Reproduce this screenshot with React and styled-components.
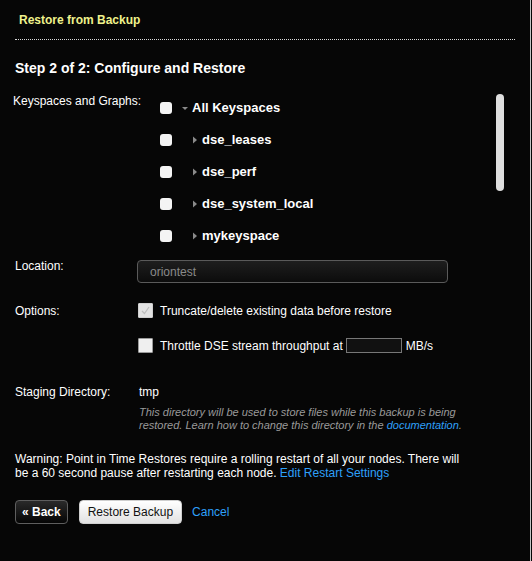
import React from 'react';
import styled, { createGlobalStyle } from 'styled-components';

const keyspaces = ['dse_leases', 'dse_perf', 'dse_system_local', 'mykeyspace'];

const Arrow = ({ open }) =>
  open ? (
    <svg width="8" height="8" viewBox="0 0 8 8">
      <path d="M1 3 L7 3 L4 6 Z" fill="#8a8a8a" />
    </svg>
  ) : (
    <svg width="8" height="8" viewBox="0 0 8 8">
      <path d="M2 0.5 L6 4 L2 7.5 Z" fill="#8a8a8a" />
    </svg>
  );

const App = () => {
  return (
    <>
      <GlobalStyle />
      <Panel>
        <Header>
          <Title>Restore from Backup</Title>
        </Header>
        <Body>
          <StepTitle>Step 2 of 2: Configure and Restore</StepTitle>

          <FieldRow $top={15}>
            <Label $offset={2} $shift={-2}>Keyspaces and Graphs:</Label>
            <TreeArea>
              <TreeList>
                <TreeRow>
                  <TreeCheck />
                  <ArrowBox>
                    <Arrow open />
                  </ArrowBox>
                  <TreeText>All Keyspaces</TreeText>
                </TreeRow>
                {keyspaces.map((name) => (
                  <TreeRow key={name} $child>
                    <TreeCheck />
                    <ArrowBox $child>
                      <Arrow />
                    </ArrowBox>
                    <TreeText>{name}</TreeText>
                  </TreeRow>
                ))}
              </TreeList>
              <ScrollThumb />
            </TreeArea>
          </FieldRow>

          <FieldRow $top={7}>
            <Label>Location:</Label>
            <TextInput placeholder="oriontest" readOnly />
          </FieldRow>

          <FieldRow $top={20}>
            <Label $offset={1}>Options:</Label>
            <Options>
              <OptionLine>
                <CheckBox $disabled>
                  <svg width="11" height="11" viewBox="0 0 11 11">
                    <path
                      d="M2 6 L4.5 8.5 L9 2"
                      fill="none"
                      stroke="#bdbdbd"
                      strokeWidth="1.2"
                    />
                  </svg>
                </CheckBox>
                <OptionText>Truncate/delete existing data before restore</OptionText>
              </OptionLine>
              <OptionLine>
                <CheckBox />
                <OptionText>Throttle DSE stream throughput at</OptionText>
                <SmallInput readOnly />
                <OptionText>MB/s</OptionText>
              </OptionLine>
            </Options>
          </FieldRow>

          <FieldRow $top={32}>
            <Label>Staging Directory:</Label>
            <div>
              <Value>tmp</Value>
              <Help>
                This directory will be used to store files while this backup is being
                <br />
                restored. Learn how to change this directory in the{' '}
                <Link href="#">documentation</Link>.
              </Help>
            </div>
          </FieldRow>

          <Warning>
            Warning: Point in Time Restores require a rolling restart of all your nodes. There will
            <br />
            be a 60 second pause after restarting each node. <Link href="#">Edit Restart Settings</Link>
          </Warning>

          <ButtonBar>
            <Button $dark>« Back</Button>
            <Button>Restore Backup</Button>
            <Link href="#">Cancel</Link>
          </ButtonBar>
        </Body>
      </Panel>
    </>
  );
};

export default App;

// Styled Components
const GlobalStyle = createGlobalStyle`
  html, body {
    margin: 0;
    padding: 0;
    background: #060606;
  }
  body {
    font-family: "Liberation Sans", Arial, Helvetica, sans-serif;
    font-size: 12px;
    color: #fff;
  }
  * {
    box-sizing: border-box;
  }
`;

const Panel = styled.div`
  width: 531px;
  min-height: 561px;
  border-right: 1px solid #c4c4c4;
  background: #060606;
`;

const Header = styled.div`
  margin: 0 15px;
  padding: 13px 4px 12px;
  border-bottom: 1px dotted #d8d8d8;
`;

const Title = styled.h1`
  margin: 0;
  font-size: 12px;
  line-height: 14px;
  font-weight: bold;
  color: #eff28c;
`;

const Body = styled.div`
  padding: 0 15px;
`;

const StepTitle = styled.h2`
  margin: 20px 0 0;
  font-size: 14px;
  line-height: 17px;
  font-weight: bold;
  color: #fff;
`;

const FieldRow = styled.div`
  display: grid;
  grid-template-columns: 122px 1fr;
  align-items: start;
  margin-top: ${(p) => p.$top || 0}px;
`;

const Label = styled.div`
  padding-top: ${(p) => p.$offset || 0}px;
  margin-left: ${(p) => p.$shift || 0}px;
  font-size: 12px;
  line-height: 14px;
  white-space: nowrap;
  color: #fff;
`;

const TreeArea = styled.div`
  display: flex;
  align-items: flex-start;
  height: 160px;
  overflow: hidden;
`;

const TreeList = styled.div`
  flex: 1;
  padding-left: 23px;
`;

const TreeRow = styled.div`
  display: flex;
  align-items: center;
  height: 32px;
`;

const TreeCheck = styled.span`
  display: inline-block;
  width: 12px;
  height: 12px;
  border-radius: 3px;
  background: #f4f4f4;
  margin-right: 9px;
  flex-shrink: 0;
`;

const ArrowBox = styled.span`
  display: inline-flex;
  align-items: center;
  justify-content: center;
  width: 8px;
  height: 8px;
  margin-left: ${(p) => (p.$child ? 10 : 0)}px;
  margin-right: 3px;
`;

const TreeText = styled.span`
  font-size: 13px;
  font-weight: bold;
  line-height: 16px;
  color: #fff;
`;

const ScrollThumb = styled.div`
  width: 8px;
  height: 97px;
  margin: 2px 11px 0 0;
  border-radius: 4px;
  background: #dedede;
  flex-shrink: 0;
`;

const TextInput = styled.input`
  width: 311px;
  height: 23px;
  margin-top: 1px;
  padding: 0 12px;
  border: 1px solid #5a5a5a;
  border-radius: 4px;
  background: linear-gradient(#1e1e1e, #0c0c0c);
  font-family: inherit;
  font-size: 12px;
  color: #ddd;
  outline: none;

  &::placeholder {
    color: #8a8a8a;
  }
`;

const Options = styled.div`
  display: flex;
  flex-direction: column;
  gap: 20px;
`;

const OptionLine = styled.div`
  display: flex;
  align-items: center;
  height: 15px;
  margin-left: 1px;
`;

const CheckBox = styled.span`
  display: inline-flex;
  align-items: center;
  justify-content: center;
  width: 15px;
  height: 15px;
  margin-right: 7px;
  border: 1px solid ${(p) => (p.$disabled ? '#cfcfcf' : '#9a9a9a')};
  border-radius: 1px;
  background: ${(p) => (p.$disabled ? '#e2e2e2' : '#efefef')};
  flex-shrink: 0;
`;

const OptionText = styled.span`
  font-size: 12px;
  line-height: 14px;
  color: #fff;
`;

const SmallInput = styled.input`
  width: 56px;
  height: 15px;
  margin: 0 4px 0 3px;
  padding: 0;
  border: 1px solid #777;
  background: #111;
  outline: none;
`;

const Value = styled.div`
  margin-left: 2px;
  font-size: 12px;
  line-height: 14px;
  color: #fff;
`;

const Help = styled.p`
  margin: 7px 0 0 2px;
  font-size: 11px;
  line-height: 13px;
  font-style: italic;
  color: #9a9a9a;
`;

const Link = styled.a`
  color: #2ea0fa;
  text-decoration: none;
  font-size: inherit;
`;

const Warning = styled.p`
  margin: 20px 0 0;
  font-size: 12px;
  line-height: 14px;
  color: #fff;
`;

const ButtonBar = styled.div`
  display: flex;
  align-items: center;
  gap: 10px;
  margin-top: 20px;

  ${Link} {
    font-size: 12px;
  }
`;

const Button = styled.button`
  height: 24px;
  padding: 0 ${(p) => (p.$dark ? 6 : 8)}px;
  margin-right: ${(p) => (p.$dark ? 1 : 0)}px;
  border: 1px solid ${(p) => (p.$dark ? '#5e5e5e' : '#cfcfcf')};
  border-radius: 4px;
  background: ${(p) =>
    p.$dark ? 'linear-gradient(#2a2a2a, #050505)' : 'linear-gradient(#ffffff, #e2e2e2)'};
  font-family: inherit;
  font-size: 12px;
  font-weight: ${(p) => (p.$dark ? 'bold' : 'normal')};
  color: ${(p) => (p.$dark ? '#fff' : '#111')};
  cursor: pointer;
`;
